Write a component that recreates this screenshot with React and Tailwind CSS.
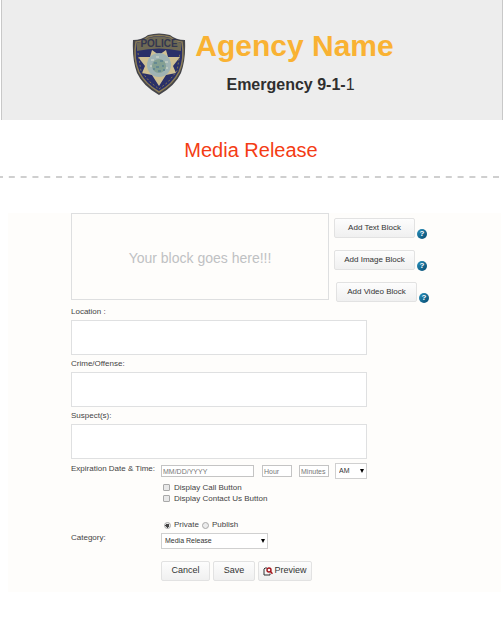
const sans = "font-['Liberation_Sans',Arial,sans-serif]";
const btn =
  "h-5 shrink-0 rounded-[2px] border border-[#e2e2e2] bg-linear-to-b from-[#fdfdfd] to-[#f0f0f0] text-[#333]";
const field =
  "border border-[#c4c4c4] bg-white h-3 px-px text-[7px] leading-[10px] text-[#444] placeholder:text-[#777] placeholder:opacity-100 outline-none";

function Badge() {
  return (
    <svg viewBox="0 0 54 62" className="h-[62px] w-[54px] shrink-0" aria-hidden="true">
      <path d="M1 7Q10 7 16 2Q27 -1 38 2Q44 7 53 7Q54 26 49 40Q43 53 27 62Q11 53 5 40Q0 26 1 7Z" fill="#45454a" />
      <path d="M4 9Q10 9 16 4Q27 1 38 4Q44 9 50 9Q53 26 47 39Q41 51 27 59Q13 51 7 39Q1 26 4 9Z" fill="#2a3068" stroke="#8c7e58" strokeWidth="1.5" />
      <path d="M5 10Q11 9 16 5Q27 2 38 5Q44 9 49 10L49 18Q27 13 5 18Z" fill="#6f6a55" />
      <text x="27" y="14" textAnchor="middle" fill="#33364f" className="text-[10px] font-bold">POLICE</text>
      <path d="M20 17L27 22L34 17L36 24L48 24L41 33L44 40L34 42L27 53L20 42L10 40L13 33L6 24L18 24Z" fill="#cfc093" />
      <circle cx="27" cy="32" r="12" fill="#9fb3b4" />
      <circle cx="27" cy="33" r="7" fill="#84a092" />
      <path d="M22 30H25M28 28H31M24 34H27M30 33H32M26 38H29M21 36H23M31 37H33" stroke="#5c8394" strokeWidth="1.5" />
      <path d="M19 27H22M33 29H36M18 33H20M24 24H27M34 35H36" stroke="#c6d1c4" strokeWidth="1.5" />
      <path d="M6 20L9 38L18 49L27 56L36 49L45 38L48 20" fill="none" stroke="#82764f" strokeDasharray="2 2" />
    </svg>
  );
}

function Help({ topic }) {
  return (
    <button type="button" aria-label={"Help: " + topic} className="mt-[11px] size-[10px] shrink-0 rounded-full bg-linear-to-br from-[#2b93bd] to-[#064a70] text-center text-[8px] leading-[10px] font-bold text-white">
      ?
    </button>
  );
}

function AddRow({ label, shift }) {
  return (
    <div className={"flex items-start gap-[2px] " + (shift ? "pl-[2px]" : "")}>
      <button type="button" className={btn + " w-[81px] text-[8px]"}>
        {label}
      </button>
      <Help topic={label} />
    </div>
  );
}

function Area({ id, label }) {
  return (
    <div className="flex flex-col">
      <label htmlFor={id} className="h-[17px] text-[8px] leading-[18px]">{label}</label>
      <textarea id={id} className="block h-[35px] w-full resize-none border border-[#dfe0e1] bg-white p-1 text-[8px] outline-none" />
    </div>
  );
}

function Check({ label }) {
  return (
    <label className="flex h-[11px] items-center gap-1 text-[8px] leading-[11px]">
      <input type="checkbox" className="size-[7px] appearance-none rounded-[1px] border border-[#a9a9a9] bg-[#e8e8e8] checked:bg-[#555]" />
      {label}
    </label>
  );
}

function Radio({ label, on }) {
  return (
    <label className="flex items-center gap-[3px] text-[8px] leading-[12px]">
      <input type="radio" name="visibility" defaultChecked={on} className="size-[7px] appearance-none rounded-full border border-[#a9a9a9] bg-[#ececec] checked:bg-[radial-gradient(circle,#444_0_2px,#ececec_2px)]" />
      {label}
    </label>
  );
}

function Pick({ id, label, option, className }) {
  return (
    <div className={"relative " + className}>
      <select id={id} aria-label={label} className="block h-4 w-full appearance-none border border-[#d0d0d0] bg-white pl-[3px] text-[7px] leading-[14px] text-[#333] outline-none">
        <option>{option}</option>
      </select>
      <svg viewBox="0 0 4 4" className="pointer-events-none absolute top-[6px] right-[3px] size-1" aria-hidden="true">
        <path d="M0 0H4L2 4Z" fill="#000" />
      </svg>
    </div>
  );
}

export default function App() {
  return (
    <div className={"min-h-screen bg-white text-[#444] " + sans}>
      <header className="mx-px flex h-[120px] items-start justify-center gap-[9px] border-x border-[#c8c8c8] bg-[#ededed] pt-[33px] pl-[22px]">
        <Badge />
        <div className="flex flex-col items-center">
          <h1 className="-mt-1 text-[30px] leading-[34px] font-bold text-[#f9b233]">Agency Name</h1>
          <p className="mt-3 pr-2 text-[16px] leading-[20px] font-bold text-[#2f2f2f]">
            Emergency 9-1-<span className="font-normal">1</span>
          </p>
        </div>
      </header>

      <h2 className="pt-[18px] pr-[2px] text-center text-[20px] leading-6 text-[#f43c14]">Media Release</h2>
      <svg className="mt-[14px] block h-[2px] w-full" aria-hidden="true">
        <line x1="-3" y1="1" x2="100%" y2="1" stroke="#cfcfcf" strokeWidth="2" strokeDasharray="6 5.81" />
      </svg>

      <form className="mt-[35px] mr-[3px] ml-2 bg-[#fefdfb] pb-[11px] pl-[63px]" onSubmit={(e) => e.preventDefault()}>
        <div className="flex gap-[5px]">
          <div className="flex h-[87px] w-[258px] items-center justify-center border border-[#dedfe0] pt-1 text-[14px] text-[#bfc1c3]">
            Your block goes here!!!
          </div>
          <div className="flex flex-col gap-[11px] pt-[5px]">
            <AddRow label="Add Text Block" />
            <AddRow label="Add Image Block" />
            <AddRow label="Add Video Block" shift />
          </div>
        </div>

        <div className="w-[296px]">
          <Area id="location" label="Location :" />
          <Area id="crime" label="Crime/Offense:" />
          <Area id="suspects" label="Suspect(s):" />

          <div className="mt-1 flex items-center">
            <label htmlFor="date" className="w-[90px] pb-1 text-[8px] leading-[10px] whitespace-nowrap">Expiration Date &amp; Time:</label>
            <input id="date" placeholder="MM/DD/YYYY" className={field + " w-[93px]"} />
            <input aria-label="Hour" placeholder="Hour" className={field + " ml-2 w-[30px]"} />
            <input aria-label="Minutes" placeholder="Minutes" className={field + " ml-[7px] w-[30px]"} />
            <Pick id="ampm" label="AM or PM" option="AM" className="ml-[6px] w-8" />
          </div>

          <div className="mt-[3px] pl-[92px]">
            <Check label="Display Call Button" />
            <Check label="Display Contact Us Button" />
          </div>

          <div className="mt-[15px] flex gap-[3px] pl-[93px]">
            <Radio label="Private" on />
            <Radio label="Publish" />
          </div>

          <div className="mt-[2px] flex items-start">
            <label htmlFor="category" className="w-[90px] text-[8px] leading-[10px]">Category:</label>
            <Pick id="category" option="Media Release" className="w-[107px]" />
          </div>

          <div className="mt-3 flex gap-[3px] pl-[90px] text-[9px]">
            <button type="submit" className={btn + " w-[49px]"}>Cancel</button>
            <button type="submit" className={btn + " w-[42px]"}>Save</button>
            <button type="button" className={btn + " flex w-[54px] items-center justify-center gap-px"}>
              <svg viewBox="0 0 10 9" className="h-[9px] w-[10px] shrink-0" fill="none" aria-hidden="true">
                <path d="M4 1H2L1 2V8H7V6.500" stroke="#333" />
                <circle cx="6" cy="3" r="2" stroke="#a3141c" strokeWidth="1.4" />
                <path d="M7.3 4.300L9.500 6.700" stroke="#a3141c" strokeWidth="1.5" />
              </svg>
              Preview
            </button>
          </div>
        </div>
      </form>
    </div>
  );
}
